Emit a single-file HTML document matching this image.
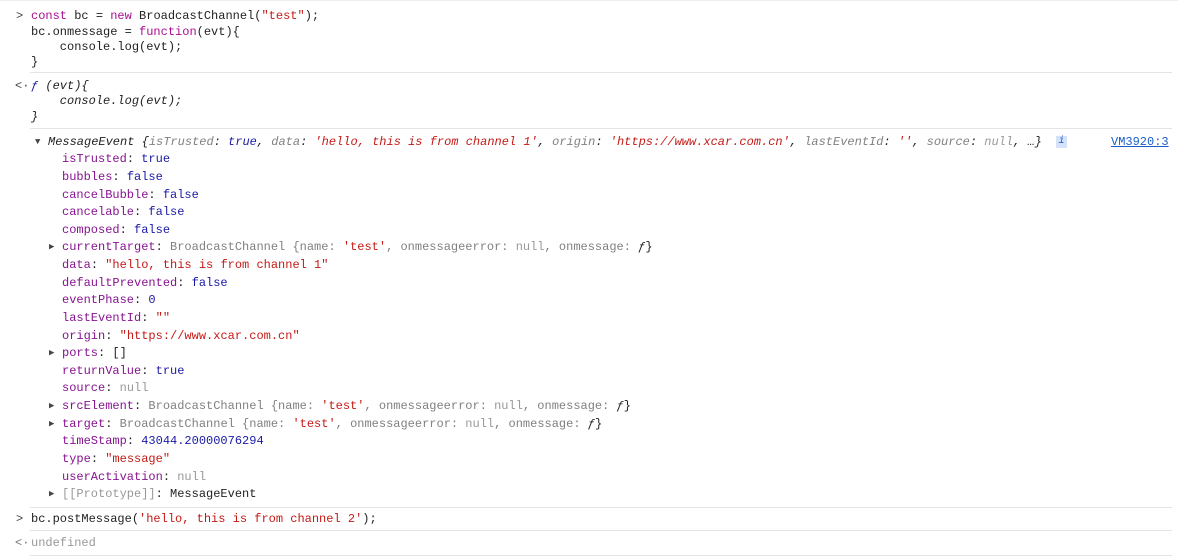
<!DOCTYPE html>
<html><head><meta charset="utf-8"><style>
body{margin:0;width:1178px;height:558px;background:#fff;overflow:hidden;font-family:"Liberation Mono",monospace;font-size:12px;position:relative}
.l{position:absolute;height:16px;line-height:16px;white-space:pre;color:#222}
.hr{position:absolute;left:30px;right:6px;height:1px;background:#e4e4e4}
.k{color:#aa0d91}.s{color:#c41a16}.p{color:#881391}.b{color:#1a1aa6}.g{color:#808080}.n{color:#999}
.i{font-style:italic}
.tri{position:absolute;font-size:9px;color:#444}
.pr{position:absolute;left:16px;color:#444;font-size:12px}
</style></head><body>
<div class="hr" style="top:0;left:0;right:0;background:#eee"></div>
<div class="l pr" style="top:8px">&gt;</div>
<div class="l" style="left:31px;top:8px"><span class="k">const</span> bc = <span class="k">new</span> BroadcastChannel(<span class="s">"test"</span>);</div>
<div class="l" style="left:31px;top:24px">bc.onmessage = <span class="k">function</span>(evt){</div>
<div class="l" style="left:31px;top:39px">    console.log(evt);</div>
<div class="l" style="left:31px;top:54px">}</div>
<div class="hr" style="top:72px"></div>
<div class="l pr" style="top:78px;left:15px">&lt;·</div>
<div class="l i" style="left:31px;top:78px"><span class="b">ƒ</span> (evt){</div>
<div class="l i" style="left:31px;top:93px">    console.log(evt);</div>
<div class="l i" style="left:31px;top:109px">}</div>
<div class="hr" style="top:128px"></div>
<div class="tri" style="left:35px;top:137px">▼</div>
<div class="l i" style="left:48px;top:134px">MessageEvent {<span class="g">isTrusted</span>: <span class="b">true</span>, <span class="g">data</span>: <span class="s">'hello, this is from channel 1'</span>, <span class="g">origin</span>: <span class="s">'https://www.xcar.com.cn'</span>, <span class="g">lastEventId</span>: <span class="s">''</span>, <span class="g">source</span>: <span class="n">null</span>, …}</div>
<div style="position:absolute;left:1056px;top:136px;width:11px;height:12px;background:#d4e3fa;color:#1a5dc9;font-size:10px;line-height:12px;text-align:center;font-style:italic">i</div>
<div class="l" style="left:1111px;top:134px;color:#1a5dc9;text-decoration:underline">VM3920:3</div>
<div class="l" style="left:62px;top:151px"><span class="p">isTrusted</span>: <span class="b">true</span></div>
<div class="l" style="left:62px;top:169px"><span class="p">bubbles</span>: <span class="b">false</span></div>
<div class="l" style="left:62px;top:187px"><span class="p">cancelBubble</span>: <span class="b">false</span></div>
<div class="l" style="left:62px;top:204px"><span class="p">cancelable</span>: <span class="b">false</span></div>
<div class="l" style="left:62px;top:222px"><span class="p">composed</span>: <span class="b">false</span></div>
<div class="tri" style="left:49px;top:242px">▶</div>
<div class="l" style="left:62px;top:239px"><span class="p">currentTarget</span>: <span class="g">BroadcastChannel {name: </span><span class="s">'test'</span><span class="g">, onmessageerror: </span><span class="n">null</span><span class="g">, onmessage: </span><span class="i">ƒ</span>}</div>
<div class="l" style="left:62px;top:257px"><span class="p">data</span>: <span class="s">"hello, this is from channel 1"</span></div>
<div class="l" style="left:62px;top:275px"><span class="p">defaultPrevented</span>: <span class="b">false</span></div>
<div class="l" style="left:62px;top:292px"><span class="p">eventPhase</span>: <span class="b">0</span></div>
<div class="l" style="left:62px;top:310px"><span class="p">lastEventId</span>: <span class="s">""</span></div>
<div class="l" style="left:62px;top:328px"><span class="p">origin</span>: <span class="s">"https://www.xcar.com.cn"</span></div>
<div class="tri" style="left:49px;top:348px">▶</div>
<div class="l" style="left:62px;top:345px"><span class="p">ports</span>: []</div>
<div class="l" style="left:62px;top:363px"><span class="p">returnValue</span>: <span class="b">true</span></div>
<div class="l" style="left:62px;top:380px"><span class="p">source</span>: <span class="n">null</span></div>
<div class="tri" style="left:49px;top:401px">▶</div>
<div class="l" style="left:62px;top:398px"><span class="p">srcElement</span>: <span class="g">BroadcastChannel {name: </span><span class="s">'test'</span><span class="g">, onmessageerror: </span><span class="n">null</span><span class="g">, onmessage: </span><span class="i">ƒ</span>}</div>
<div class="tri" style="left:49px;top:419px">▶</div>
<div class="l" style="left:62px;top:416px"><span class="p">target</span>: <span class="g">BroadcastChannel {name: </span><span class="s">'test'</span><span class="g">, onmessageerror: </span><span class="n">null</span><span class="g">, onmessage: </span><span class="i">ƒ</span>}</div>
<div class="l" style="left:62px;top:433px"><span class="p">timeStamp</span>: <span class="b">43044.20000076294</span></div>
<div class="l" style="left:62px;top:451px"><span class="p">type</span>: <span class="s">"message"</span></div>
<div class="l" style="left:62px;top:469px"><span class="p">userActivation</span>: <span class="n">null</span></div>
<div class="tri" style="left:49px;top:489px">▶</div>
<div class="l" style="left:62px;top:486px"><span class="n">[[Prototype]]</span>: MessageEvent</div>
<div class="hr" style="top:507px"></div>
<div class="l pr" style="top:511px">&gt;</div>
<div class="l" style="left:31px;top:511px">bc.postMessage(<span class="s">'hello, this is from channel 2'</span>);</div>
<div class="hr" style="top:530px"></div>
<div class="l pr" style="top:535px;left:15px;color:#777">&lt;·</div>
<div class="l" style="left:31px;top:535px;color:#999">undefined</div>
<div class="hr" style="top:555px"></div>
</body></html>
